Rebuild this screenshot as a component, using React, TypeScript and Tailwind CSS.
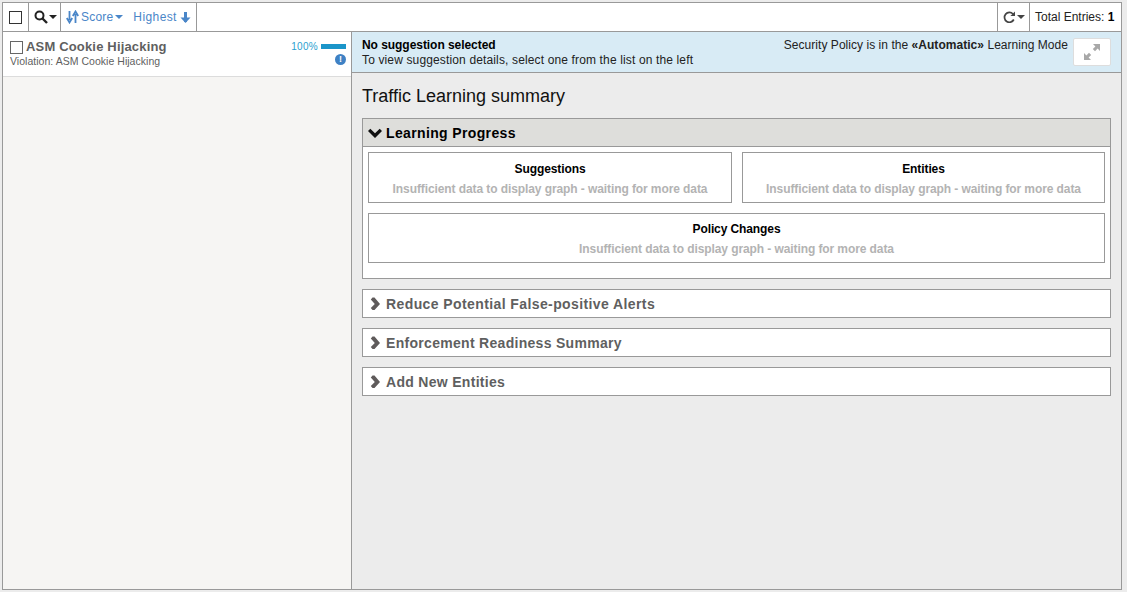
const font = "font-['Liberation_Sans',Arial,sans-serif]";

function Caret({ className = "" }: { className?: string }) {
  return (
    <svg width="8" height="4" viewBox="0 0 8 4" className={className}>
      <path d="M0 0h8L4 4z" fill="currentColor" />
    </svg>
  );
}

function Chevron({ open, color }: { open?: boolean; color: string }) {
  return (
    <svg width="14" height="14" viewBox="0 0 14 14" className="shrink-0">
      {open ? (
        <path d="M0 3.5 L2.3 1.2 L7 5.7 L11.7 1.2 L14 3.5 L7 10.5 z" fill={color} transform="translate(0 1.5)" />
      ) : (
        <path d="M3.5 0.5 L5.5 0.5 L11 7 L5.5 13 L3.5 13 L1.8 11 L5.8 7 L1.8 2.5 z" fill={color} />
      )}
    </svg>
  );
}

function GraphBox({ title, className = "", top = "mt-[9px]" }: { title: string; className?: string; top?: string }) {
  return (
    <div className={`bg-white border border-[#999] flex flex-col items-center ${className}`}>
      <div className={`text-[12px] font-bold text-black leading-[14px] tracking-[-0.1px] ${top}`}>{title}</div>
      <div className="text-[12px] font-bold text-[#b3b3b3] leading-[14px] mt-[6px] tracking-[-0.09px]">
        Insufficient data to display graph - waiting for more data
      </div>
    </div>
  );
}

function Collapsed({ title, tracking = "tracking-[0.3px]" }: { title: string; tracking?: string }) {
  return (
    <div className="h-[29px] bg-white border border-[#999] flex items-center pl-[6px] gap-[3px]">
      <Chevron color="#5f5b5b" />
      <span className={`text-[14px] font-bold text-[#5f5f5f] mt-[2px] ${tracking}`}>{title}</span>
    </div>
  );
}

export default function App() {
  return (
    <div className={`${font} w-[1127px] h-[592px] bg-[#ececec] pt-[2px] pl-[2px] pr-[5px] pb-[2px] overflow-hidden`}>
      <div className="w-full h-full border border-[#999] flex flex-col">
        <div className="h-[29px] bg-white border-b border-[#999] flex items-stretch shrink-0 text-[12px]">
          <div className="w-[26px] border-r border-[#999] flex items-center justify-center">
            <div className="w-[13px] h-[13px] border border-[#333]" />
          </div>
          <div className="w-[32px] border-r border-[#999] flex items-center pl-[5px] gap-[1px] text-[#222]">
            <svg width="14" height="14" viewBox="0 0 14 14">
              <circle cx="5.5" cy="5.5" r="4" fill="none" stroke="#222" strokeWidth="2" />
              <path d="M8.5 8.5 L13 13" stroke="#222" strokeWidth="2.4" />
            </svg>
            <Caret />
          </div>
          <div className="w-[136px] border-r border-[#999] flex items-center pl-[5px] text-[#4a86c8]">
            <svg width="13" height="14" viewBox="0 0 13 14" className="mr-[2px]">
              <path d="M3.5 1v9M0.8 8 L3.5 12.5 L6.2 8" fill="none" stroke="#4a86c8" strokeWidth="1.8" />
              <path d="M9.5 13V4M6.8 6 L9.5 1.5 L12.2 6" fill="none" stroke="#4a86c8" strokeWidth="1.8" />
            </svg>
            <span className="tracking-[0.2px]">Score</span>
            <Caret className="ml-[2px]" />
            <span className="ml-[10px] tracking-[0.4px]">Highest</span>
            <svg width="11" height="13" viewBox="0 0 11 13" className="ml-[3px]">
              <path d="M5.5 1v10" stroke="#4a86c8" strokeWidth="3" />
              <path d="M0.5 6.5 L5.5 12 L10.5 6.5z" fill="#4a86c8" />
            </svg>
          </div>
          <div className="flex-1" />
          <div className="w-[32px] border-l border-[#999] flex items-center pl-[5px] gap-[1px] text-[#444]">
            <svg width="13" height="13" viewBox="0 0 13 13">
              <path d="M10.8 8.5A4.9 4.9 0 1 1 10 3" fill="none" stroke="#444" strokeWidth="1.7" />
              <path d="M12 0.5v4.6H7.4z" fill="#444" />
            </svg>
            <Caret />
          </div>
          <div className="w-[92px] border-l border-[#999] flex items-center pl-[5px] text-[#222] whitespace-nowrap">
            Total Entries:&nbsp;<b className="text-black">1</b>
          </div>
        </div>

        <div className="flex-1 flex min-h-0">
          <div className="w-[349px] shrink-0 bg-[#f6f5f3] border-r border-[#999]">
            <div className="h-[45px] bg-white border-b border-[#dcdcdc] flex justify-between pl-[7px] pr-[5px]">
              <div>
                <div className="flex items-center mt-[8px] h-[14px]">
                  <div className="w-[13px] h-[13px] border border-[#666] mr-[3px]" />
                  <span className="text-[13px] font-bold tracking-[0.17px] text-[#5f5f5f]">ASM Cookie Hijacking</span>
                </div>
                <div className="text-[10.5px] leading-[13px] mt-[1px] tracking-[0.03px] text-[#5f5f5f]">Violation: ASM Cookie Hijacking</div>
              </div>
              <div className="flex flex-col items-end mt-[9px]">
                <div className="flex items-center gap-[3px]">
                  <span className="text-[10px] leading-[12px] tracking-[0.3px] text-[#2a9fd0]">100%</span>
                  <div className="w-[25px] h-[5px] bg-[#1b95c9] -mt-[1px]" />
                </div>
                <div className="w-[11px] h-[11px] rounded-full bg-[#3f81c4] mt-[1px] flex items-center justify-center text-white text-[9px] font-bold leading-none">
                  !
                </div>
              </div>
            </div>
          </div>

          <div className="flex-1 min-w-0 flex flex-col">
            <div className="h-[41px] shrink-0 bg-[#d8ebf5] border-b border-[#999] flex justify-between pl-[10px] pr-[10px] text-[12px] text-[#222]">
              <div className="pt-[6px] leading-[15px]">
                <div className="font-bold text-black tracking-[-0.05px]">No suggestion selected</div>
                <div className="tracking-[0.14px]">To view suggestion details, select one from the list on the left</div>
              </div>
              <div className="flex items-start">
                <div className="pt-[6px] leading-[15px] tracking-[0.04px]">
                  Security Policy is in the <b>«Automatic»</b> Learning Mode
                </div>
                <div className="w-[38px] h-[28px] mt-[6px] ml-[5px] bg-white border border-[#ddd] rounded-[2px] flex items-center justify-center">
                  <svg width="18" height="18" viewBox="0 0 18 18">
                    <path d="M10 1h7v7l-2.4-2.4-2.6 2.6-2.2-2.2 2.6-2.6z M8 17H1v-7l2.4 2.4 2.6-2.6 2.2 2.2-2.6 2.6z" fill="#a8a8a8" />
                  </svg>
                </div>
              </div>
            </div>

            <div className="flex-1 pl-[10px] pr-[10px]">
              <div className="text-[18px] leading-[21px] text-[#111] pt-[13px] pb-[11px]">Traffic Learning summary</div>

              <div className="border border-[#999] bg-white">
                <div className="h-[28px] bg-[#dededb] border-b border-[#999] flex items-center pl-[5px] gap-[4px]">
                  <Chevron open color="#111" />
                  <span className="text-[14px] font-bold tracking-[0.36px] text-black mt-[2px]">Learning Progress</span>
                </div>
                <div className="pt-[5px] pl-[5px] pr-[5px] pb-[15px] flex flex-col gap-[10px]">
                  <div className="flex gap-[10px]">
                    <GraphBox title="Suggestions" className="w-[364px] h-[51px]" />
                    <GraphBox title="Entities" className="flex-1 h-[51px]" />
                  </div>
                  <GraphBox title="Policy Changes" className="h-[50px]" top="mt-[8px]" />
                </div>
              </div>

              <div className="flex flex-col gap-[10px] mt-[10px]">
                <Collapsed title="Reduce Potential False-positive Alerts" tracking="tracking-[0.4px]" />
                <Collapsed title="Enforcement Readiness Summary" />
                <Collapsed title="Add New Entities" />
              </div>
            </div>
          </div>
        </div>
      </div>
    </div>
  );
}
